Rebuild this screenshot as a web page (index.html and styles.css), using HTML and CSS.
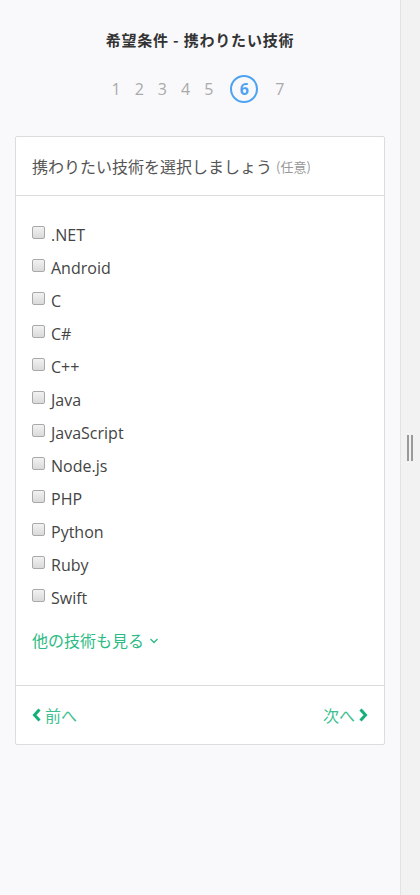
FILE: index.html
```html
<!DOCTYPE html>
<html lang="ja">
<head>
<meta charset="utf-8">
<title>希望条件 - 携わりたい技術</title>
<link rel="stylesheet" href="styles.css">
</head>
<body>
<main class="main">
  <h1 class="title">希望条件 - 携わりたい技術</h1>
  <ol class="steps">
    <li class="step">1</li>
    <li class="step">2</li>
    <li class="step">3</li>
    <li class="step">4</li>
    <li class="step">5</li>
    <li class="step step-current">6</li>
    <li class="step">7</li>
  </ol>
  <section class="card">
    <header class="card-head">携わりたい技術を選択しましょう <span class="optional">(任意)</span></header>
    <div class="card-body">
      <ul class="options">
        <li class="option"><span class="box"></span><span class="label">.NET</span></li>
        <li class="option"><span class="box"></span><span class="label">Android</span></li>
        <li class="option"><span class="box"></span><span class="label">C</span></li>
        <li class="option"><span class="box"></span><span class="label">C#</span></li>
        <li class="option"><span class="box"></span><span class="label">C++</span></li>
        <li class="option"><span class="box"></span><span class="label">Java</span></li>
        <li class="option"><span class="box"></span><span class="label">JavaScript</span></li>
        <li class="option"><span class="box"></span><span class="label">Node.js</span></li>
        <li class="option"><span class="box"></span><span class="label">PHP</span></li>
        <li class="option"><span class="box"></span><span class="label">Python</span></li>
        <li class="option"><span class="box"></span><span class="label">Ruby</span></li>
        <li class="option"><span class="box"></span><span class="label">Swift</span></li>
      </ul>
      <a class="more">他の技術も見る<svg class="more-icon" width="10" height="8" viewBox="0 0 10 8"><polyline points="1.5,2 5,5.5 8.5,2" fill="none" stroke="currentColor" stroke-width="1.3"/></svg></a>
    </div>
    <footer class="card-foot">
      <a class="nav nav-prev"><svg class="chev" width="10" height="14" viewBox="0 0 10 14"><polyline points="7.5,1.5 2.5,7 7.5,12.5" fill="none" stroke="currentColor" stroke-width="3"/></svg>前へ</a>
      <a class="nav nav-next">次へ<svg class="chev" width="10" height="14" viewBox="0 0 10 14"><polyline points="2.5,1.5 7.5,7 2.5,12.5" fill="none" stroke="currentColor" stroke-width="3"/></svg></a>
    </footer>
  </section>
</main>
<aside class="side">
  <div class="grip"><span class="grip-bar"></span><span class="grip-bar"></span></div>
</aside>
</body>
</html>
```
FILE: styles.css
```css
html, body {
  margin: 0;
  padding: 0;
  height: 100%;
}
body {
  display: flex;
  font-family: "Open Sans", "Noto Sans CJK JP", sans-serif;
  color: #444;
  background: #f9f9fb;
}
.main {
  width: 400px;
  flex: 0 0 400px;
  background: #f9f9fb;
  padding-top: 29px;
  box-sizing: border-box;
}
.title {
  margin: 0;
  text-align: center;
  font-family: "Noto Sans CJK JP", sans-serif;
  font-size: 15px;
  line-height: 22px;
  font-weight: 700;
  color: #333;
  letter-spacing: 0.8px;
}
.steps {
  list-style: none;
  margin: 24px 0 0;
  padding: 0 4px 0 0;
  display: flex;
  justify-content: center;
  align-items: center;
  height: 28px;
}
.step {
  margin: 0 7px;
  font-size: 16px;
  color: #aaa;
  line-height: 28px;
}
.step-current {
  width: 24px;
  height: 24px;
  line-height: 24px;
  border: 2px solid #4da3f2;
  border-radius: 50%;
  text-align: center;
  color: #4da3f2;
  font-weight: 700;
  margin: 0 10px;
}
.card {
  margin: 33px 15px 0;
  background: #fff;
  border: 1px solid #dcdcdf;
  border-radius: 2px;
}
.card-head {
  height: 58px;
  padding: 0 16px;
  display: flex;
  align-items: center;
  font-size: 16px;
  color: #555;
  border-bottom: 1px solid #dcdcdf;
  font-family: "Noto Sans CJK JP", sans-serif;
}
.optional {
  font-size: 13px;
  color: #999;
  margin-left: 4px;
}
.card-body {
  padding: 22px 16px 34px;
}
.options {
  list-style: none;
  margin: 0;
  padding: 0;
}
.option {
  height: 33px;
  display: flex;
  align-items: center;
}
.box {
  width: 11px;
  height: 11px;
  border: 1px solid #a9a9a9;
  border-radius: 2px;
  background: linear-gradient(#f2f2f2, #dadada);
  margin-right: 6px;
  position: relative;
  top: -2px;
}
.label {
  font-size: 16px;
  color: #444;
}
.more {
  display: flex;
  align-items: center;
  margin-top: 15px;
  height: 22px;
  font-size: 16px;
  color: #2cbb84;
  font-family: "Noto Sans CJK JP", sans-serif;
}
.more-icon {
  margin-left: 5px;
  margin-top: 2px;
}
.card-foot {
  height: 58px;
  border-top: 1px solid #dcdcdf;
  padding: 0 16px;
  display: flex;
  justify-content: space-between;
  align-items: center;
  font-family: "Noto Sans CJK JP", sans-serif;
}
.nav {
  display: flex;
  align-items: center;
  font-size: 16px;
  color: #3dbf8f;
}
.chev {
  color: #14b07a;
}
.nav-prev .chev {
  margin-right: 3px;
}
.nav-next .chev {
  margin-left: 3px;
}
.side {
  flex: 1;
  background: #f2f2f2;
  border-left: 1px solid #e3e3e3;
  display: flex;
  flex-direction: column;
  justify-content: flex-start;
}
.grip {
  margin-top: 435px;
  margin-left: 6px;
  display: flex;
  gap: 2px;
}
.grip-bar {
  width: 2px;
  height: 26px;
  background: #9a9a9a;
}
```
